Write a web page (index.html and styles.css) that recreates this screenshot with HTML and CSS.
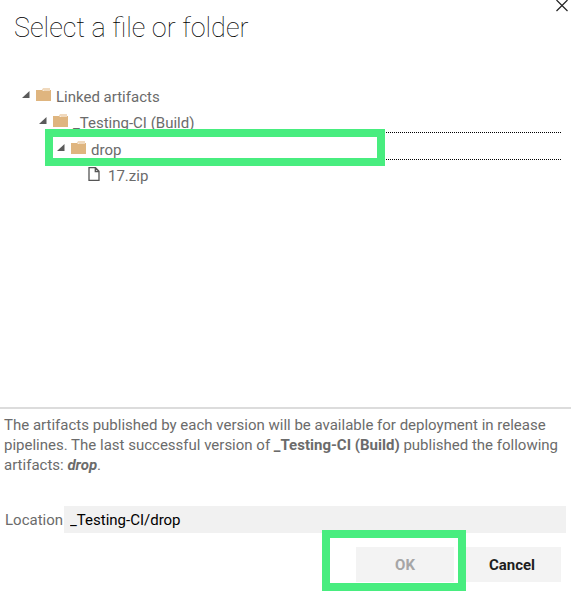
FILE: index.html
```html
<!DOCTYPE html>
<html lang="en">

<head>
    <meta charset="UTF-8" />
    <meta name="viewport" content="width=device-width, initial-scale=1" />
    <title>Select a file or folder</title>
    <link rel="stylesheet" href="styles.css">
</head>

<body>

    <!-- Icons -->
    <svg class="icon-defs" width="0" height="0" aria-hidden="true">
        <symbol id="icon-arrow" viewBox="0 0 8 8">
            <path d="M7.5 0V7H0Z" fill="#5a5a5a" />
        </symbol>
        <symbol id="icon-folder" viewBox="0 0 15 13">
            <path d="M6 2L7 0H14V2Z" fill="#f0d9bd" />
            <path d="M0 2H6L7.5 3L9 2H15V13H0Z" fill="#dfb57f" />
            <path d="M6 1.5H7.5L8 2.5H14" fill="none" stroke="#f0d9bd" />
        </symbol>
        <symbol id="icon-file" viewBox="0 0 12 14">
            <path d="M1 0.7H7.5L11 4.2V13.3H1Z M7.3 0.7V4.5H11" fill="none" stroke="#555" stroke-width="1.3" />
        </symbol>
    </svg>

    <div class="dialog">
        <!-- Header -->
        <header class="dialog-header">
            <h1>Select a file or folder</h1>
            <button class="close-btn" type="button" aria-label="Close">
                <svg width="12" height="12" viewBox="0 0 12 12">
                    <path d="M0.5 0L11.5 11M11.5 0L0.5 11" stroke="#222" stroke-width="1.2" />
                </svg>
            </button>
        </header>

        <!-- File tree -->
        <main class="tree">
            <ul>
                <li>
                    <div class="tree-row">
                        <svg class="arrow"><use href="#icon-arrow" /></svg>
                        <svg class="folder"><use href="#icon-folder" /></svg>
                        <span>Linked artifacts</span>
                    </div>
                    <ul>
                        <li>
                            <div class="tree-row">
                                <svg class="arrow"><use href="#icon-arrow" /></svg>
                                <svg class="folder"><use href="#icon-folder" /></svg>
                                <span>_Testing-CI (Build)</span>
                            </div>
                            <ul>
                                <li>
                                    <div class="tree-row selected">
                                        <svg class="arrow"><use href="#icon-arrow" /></svg>
                                        <svg class="folder"><use href="#icon-folder" /></svg>
                                        <span>drop</span>
                                        <div class="highlight highlight-row"></div>
                                    </div>
                                    <ul>
                                        <li>
                                            <div class="tree-row">
                                                <svg class="file"><use href="#icon-file" /></svg>
                                                <span>17.zip</span>
                                            </div>
                                        </li>
                                    </ul>
                                </li>
                            </ul>
                        </li>
                    </ul>
                </li>
            </ul>
        </main>

        <!-- Footer -->
        <footer class="dialog-footer">
            <p class="info">
                The artifacts published by each version will be available for deployment in release pipelines.
                The last successful version of <strong>_Testing-CI (Build)</strong> published the following
                artifacts: <strong><em>drop</em></strong>.
            </p>
            <div class="location">
                <label for="location">Location</label>
                <input type="text" id="location" value="_Testing-CI/drop" />
            </div>
            <div class="buttons">
                <div class="ok-wrap">
                    <button class="btn" type="button" disabled>OK</button>
                    <div class="highlight highlight-ok"></div>
                </div>
                <button class="btn" type="button">Cancel</button>
            </div>
        </footer>
    </div>

</body>

</html>
```

FILE: styles.css
```css
* {
    margin: 0;
    padding: 0;
    box-sizing: border-box;
}

body {
    background-color: #ffffff;
    color: #6b6b6b;
    font-family: Roboto, "Liberation Sans", sans-serif;
    font-size: 15px;
    line-height: 20px;
}

.icon-defs {
    position: absolute;
}

.dialog {
    display: flex;
    flex-direction: column;
    min-height: 100vh;
}

/* Header */
.dialog-header {
    display: flex;
    justify-content: space-between;
    align-items: flex-start;
    padding-left: 14px;
    padding-right: 3px;
}

.dialog-header h1 {
    padding-top: 13px;
    font-size: 27px;
    font-weight: 100;
    line-height: 31px;
    color: #000;
}

.close-btn {
    border: none;
    background: none;
    cursor: pointer;
}

.close-btn svg {
    display: block;
}

/* File tree */
.tree {
    flex: 1;
    padding: 36px 10px 20px 5px;
}

.tree ul {
    list-style: none;
}

.tree ul ul {
    padding-left: 17px;
}

.tree-row {
    display: flex;
    align-items: flex-start;
    height: 26px;
    padding-top: 8px;
    padding-left: 17px;
}

.tree-row span {
    line-height: 18px;
}

.arrow {
    width: 8px;
    height: 8px;
    margin-top: 3px;
    margin-right: 6px;
}

.folder {
    width: 15px;
    height: 13px;
    margin-right: 5px;
}

.file {
    width: 12px;
    height: 14px;
    margin-left: 15px;
    margin-right: 8px;
}

.tree-row.selected {
    position: relative;
    height: 28px;
    margin-left: 8px;
    margin-bottom: -1px;
    padding-left: 10px;
    border-top: 1px dotted #000;
    border-bottom: 1px dotted #000;
}

/* Highlight frames */
.highlight {
    position: absolute;
    border: 8px solid #48ed7f;
    pointer-events: none;
}

.highlight-row {
    top: -4px;
    left: -2px;
    width: 340px;
    height: 37px;
}

.highlight-ok {
    top: -17px;
    right: -12px;
    bottom: -9px;
    left: -34px;
}

/* Footer */
.dialog-footer {
    padding-bottom: 15px;
    border-top: 2px solid #dcdcdc;
}

.info {
    padding: 6px 4px 0;
}

.location {
    display: flex;
    align-items: center;
    gap: 1px;
    margin-top: 31px;
    padding: 0 5px;
}

.location input {
    flex: 1;
    min-width: 0;
    height: 27px;
    padding: 0 6px;
    border: none;
    background-color: #f1f1f1;
    color: #000;
    font: inherit;
}

.buttons {
    display: flex;
    justify-content: flex-end;
    gap: 9px;
    margin-top: 14px;
    padding-right: 10px;
}

.ok-wrap {
    position: relative;
    z-index: 1;
}

.btn {
    display: block;
    width: 98px;
    height: 35px;
    border: none;
    background-color: #f3f3f3;
    color: #1e1e1e;
    font: inherit;
    font-weight: bold;
    cursor: pointer;
}

.btn:disabled {
    color: #a6a6a6;
    cursor: default;
}
```
